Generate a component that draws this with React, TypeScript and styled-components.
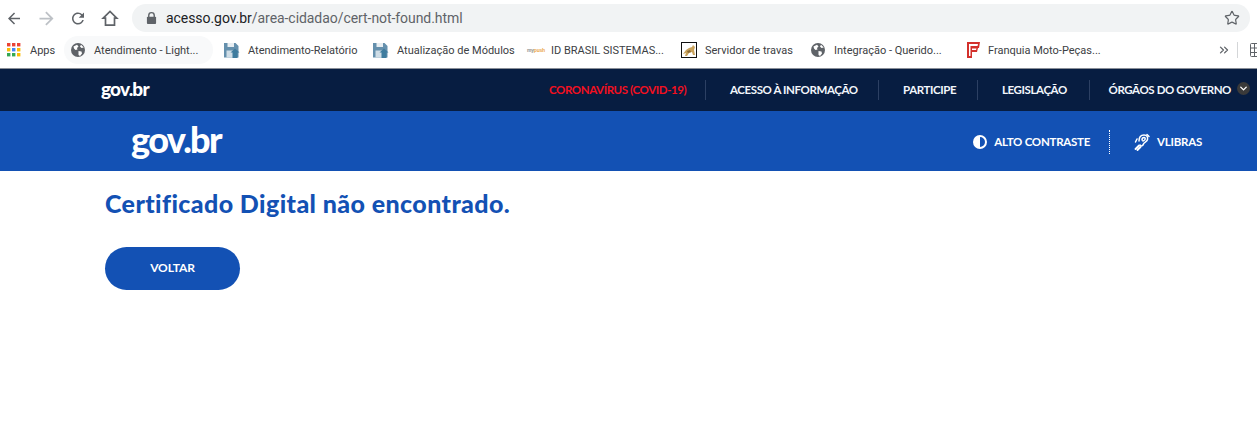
import React from "react";
import styled, { createGlobalStyle } from "styled-components";
import { Star, ChevronDown, ChevronsRight } from "lucide-react";

const Global = createGlobalStyle`
  html, body { margin: 0; padding: 0; background: #fff; }
  body { font-family: "Lato", "Liberation Sans", sans-serif; width: 1257px; height: 433px; overflow: hidden; }
`;

const Chrome = styled.div`
  height: 69px;
  border-bottom: 1px solid #8a8f98;
  box-sizing: border-box;
  background: #fff;
`;
const Toolbar = styled.div`
  height: 36px;
  display: flex;
  align-items: center;
  padding: 0 7px 0 5px;
`;
const NavButton = styled.div<{ $w: number; $c?: string }>`
  width: ${(p) => p.$w}px;
  display: flex;
  align-items: center;
  justify-content: center;
  color: ${(p) => p.$c || "#5f6368"};
  flex: none;
`;
const Omnibox = styled.div`
  flex: 1;
  height: 28px;
  border-radius: 14px;
  background: #f1f3f4;
  display: flex;
  align-items: center;
  padding: 0 10px 0 14px;
  font: 14px "Roboto", "Noto Sans", sans-serif;
  letter-spacing: -0.06px;
  color: #5f6368;
`;
const LockBox = styled.div`
  width: 20px;
  flex: none;
  display: flex;
  align-items: center;
`;
const Host = styled.span`
  color: #202124;
`;
const UrlText = styled.div`
  flex: 1;
  white-space: nowrap;
`;
const Bookmarks = styled.div`
  height: 28px;
  display: flex;
  align-items: center;
  padding-left: 6px;
  font: 11px "Roboto", "Noto Sans", sans-serif;
  color: #3c4043;
`;
const Mark = styled.div<{ $w: number; $active?: boolean; $gap?: number; $after?: number }>`
  width: ${(p) => p.$w}px;
  height: 28px;
  flex: none;
  display: flex;
  align-items: center;
  gap: ${(p) => p.$gap ?? 8}px;
  padding-left: 7px;
  margin-right: ${(p) => p.$after ?? 0}px;
  box-sizing: border-box;
  border-radius: 14px;
  background: ${(p) => (p.$active ? "#f8f9fa" : "transparent")};
  white-space: nowrap;
`;
const AppsMark = styled.div`
  width: 58px;
  height: 28px;
  flex: none;
  display: flex;
  align-items: center;
  gap: 8px;
`;
const MarkIcon = styled.svg`
  width: 16px;
  height: 16px;
  flex: none;
  display: block;
`;
const MyPush = styled.span`
  width: 16px;
  flex: none;
  font: 700 5px "Liberation Sans", sans-serif;
  letter-spacing: -0.2px;
  color: #8f8f8f;
  white-space: nowrap;
  & > b { color: #eba64a; font-weight: 700; }
`;
const BarEnd = styled.div`
  margin-left: auto;
  margin-right: -8px;
  display: flex;
  align-items: center;
  color: #5f6368;
  height: 16px;
`;
const BarDivider = styled.div`
  width: 1px;
  height: 16px;
  background: #d4d6d8;
  margin: 0 11px 0 6px;
`;

const TopBar = styled.div`
  height: 42px;
  background: #071d41;
  display: flex;
  align-items: center;
  padding-left: 101px;
  color: #fff;
`;
const LogoSmall = styled.div`
  font: 900 19px/1 "Lato", sans-serif;
  letter-spacing: -0.8px;
  margin-top: -3px;
`;
const TopNav = styled.nav`
  margin-left: auto;
  display: flex;
  align-items: center;
  padding-right: 7px;
`;
const TopItem = styled.div<{ $red?: boolean; $last?: boolean; $w: number; $pad?: number }>`
  height: 20px;
  width: ${(p) => p.$w}px;
  padding-left: ${(p) => p.$pad ?? 0}px;
  box-sizing: border-box;
  display: flex;
  align-items: center;
  justify-content: ${(p) => (p.$last ? "flex-end" : "flex-start")};
  border-right: ${(p) => (p.$last ? "none" : "1px solid #2c4063")};
  color: ${(p) => (p.$red ? "#f3101f" : "#f2f6fb")};
  font: 700 11.5px/20px "Lato", sans-serif;
  letter-spacing: -0.4px;
  white-space: nowrap;
`;
const ChevronCircle = styled.span`
  width: 13px;
  height: 13px;
  margin-left: 6px;
  margin-top: -3px;
  border-radius: 50%;
  background: #3a3a3a;
  color: #fff;
  display: flex;
  align-items: center;
  justify-content: center;
`;

const MainBar = styled.div`
  height: 60px;
  background: #1351b4;
  display: flex;
  align-items: center;
  padding: 0 55px 0 131px;
  color: #fff;
`;
const LogoLarge = styled.div`
  font: 900 36px/1 "Lato", sans-serif;
  letter-spacing: -1.6px;
  margin-top: -4px;
`;
const Tools = styled.div`
  margin-left: auto;
  display: flex;
  align-items: center;
  font: 700 11.5px/20px "Lato", sans-serif;
  letter-spacing: -0.25px;
  padding-top: 1px;
`;
const ToolItem = styled.div`
  display: flex;
  align-items: center;
  gap: 7px;
`;
const ToolDivider = styled.div`
  width: 0;
  height: 24px;
  margin: 0 24px 0 19px;
  border-left: 1px dotted #fff;
`;

const Main = styled.main`
  padding: 18px 0 0 105px;
`;
const Title = styled.h1`
  margin: 0;
  font: 900 25px/28px "Lato", sans-serif;
  color: #1351b4;
  letter-spacing: 0.4px;
`;
const BackButton = styled.button`
  display: block;
  margin-top: 30px;
  width: 135px;
  height: 43px;
  border: none;
  border-radius: 22px;
  background: #1351b4;
  color: #fff;
  font: 700 12px/1 "Lato", sans-serif;
  letter-spacing: -0.1px;
  padding: 0 0 2px;
`;

const Globe = () => (
  <MarkIcon viewBox="0 0 16 16">
    <circle cx="7" cy="8" r="7" fill="#5f6368" />
    <path d="M2.500 4.500 6 2.800 7.500 4.500 6 6 6.500 7.500 4.500 8 3 6.500zM7.500 9l3 .5 .5 2L9 14 7.500 13zM10 2.800 12.800 5.500 10.500 6 9 4.500z" fill="#fff" />
  </MarkIcon>
);
const Floppy = () => (
  <MarkIcon viewBox="0 0 16 16">
    <path d="M0 1h11.500l3 3v11.500H0z" fill="#6590ad" />
    <rect x="3.500" y="1" width="6.500" height="4" fill="#e8eef2" />
    <rect x="2.500" y="8.500" width="7" height="7" fill="#cfdde6" />
    <path d="M11 6.500 15.500 10.500H13.500V16h-5V10.500H6.500z" fill="#3f7c9e" />
  </MarkIcon>
);
const Tomcat = () => (
  <MarkIcon viewBox="0 0 16 16">
    <rect x=".5" y=".5" width="15" height="15" fill="#fff" stroke="#111" />
    <path d="M2 12 5 8l3-2 3-1 1-2 2 2-1 3 1 5h-2l-1-3-3 1-2 3H4l1-3z" fill="#c9a25b" />
    <path d="M6 9l3-1 1 2-3 1z" fill="#8a6a35" />
  </MarkIcon>
);
const FranquiaF = () => (
  <MarkIcon viewBox="0 0 14 16">
    <path d="M1 0H14L13 6H12L11 10H6V16H1Z" fill="#d3302b" />
    <path d="M3 2H12L11.500 4H3ZM6 6.500H10.500L10 8H6ZM3 4H4.500V14H3Z" fill="#fff" />
  </MarkIcon>
);
const AppsGrid = () => {
  const colors = ["#ea4335", "#ea4335", "#ea4335", "#fbbc04", "#4285f4", "#fbbc04", "#34a853", "#34a853", "#fbbc04"];
  return (
    <MarkIcon viewBox="0 0 16 16">
      {colors.map((c, i) => (
        <rect key={i} x={1 + (i % 3) * 5} y={1 + Math.floor(i / 3) * 5} width="3.400" height="3.400" fill={c} />
      ))}
    </MarkIcon>
  );
};
const Lock = () => (
  <svg width="11" height="14" viewBox="0 0 12 14">
    <path d="M3 6V4.200a3 3 0 0 1 6 0V6" fill="none" stroke="#5f6368" strokeWidth="1.500" />
    <rect x="1" y="5.500" width="10" height="8" rx="1" fill="#5f6368" />
  </svg>
);
const Contrast = () => (
  <svg width="14" height="14" viewBox="0 0 14 14">
    <circle cx="7" cy="7" r="6" fill="#1351b4" stroke="#fff" strokeWidth="2" />
    <path d="M7 1a6 6 0 0 0 0 12z" fill="#fff" />
  </svg>
);
const Libras = () => (
  <svg width="16" height="18" viewBox="0 0 16 18" fill="none" stroke="#fff" strokeWidth="1.500" strokeLinecap="round">
    <path d="M5 8c0-4 2-6 5-6s4 2 3.500 4.500S10 9 9.500 11 7 13.500 6 12" />
    <path d="M8 7c0-1.500 1-2.500 2-2.500s1.500 1 1 2-2 1.500-2 1.500" />
    <path d="M1.500 16 5 12.500M3.500 17 6.500 14" strokeWidth="1.800" />
    <path d="M13 1.500 15 3.500M3 6 1.500 9" />
  </svg>
);
const MaterialIcon = ({ d, size }: { d: string; size: number }) => (
  <svg width={size} height={size} viewBox="0 0 24 24" fill="currentColor"><path d={d} /></svg>
);
const ARROW_LEFT = "M20 11H7.830l5.590-5.590L12 4l-8 8 8 8 1.410-1.410L7.830 13H20v-2z";
const ARROW_RIGHT = "M4 11h12.170l-5.590-5.590L12 4l8 8-8 8-1.410-1.410L16.170 13H4v-2z";
const RELOAD = "M17.650 6.350A7.958 7.958 0 0 0 12 4c-4.420 0-7.990 3.580-7.990 8s3.570 8 7.990 8c3.730 0 6.840-2.550 7.730-6h-2.080A5.990 5.990 0 0 1 12 18c-3.310 0-6-2.690-6-6s2.690-6 6-6c1.660 0 3.140.69 4.220 1.780L13 11h7V4l-2.350 2.350z";
const HomeIcon = () => (
  <svg width="18" height="18" viewBox="0 0 18 18" fill="none" stroke="currentColor" strokeWidth="1.700">
    <path d="M2.200 9.200 9 2.400l6.800 6.800h-2.300v7H4.500v-7z" strokeLinejoin="miter" />
  </svg>
);

export default function App() {
  return (
    <>
      <Global />
      <Chrome>
        <Toolbar>
          <NavButton $w={18}><MaterialIcon d={ARROW_LEFT} size={21} /></NavButton>
          <NavButton $w={46} $c="#bdc1c6"><MaterialIcon d={ARROW_RIGHT} size={21} /></NavButton>
          <NavButton $w={18}><MaterialIcon d={RELOAD} size={21} /></NavButton>
          <NavButton $w={45}><HomeIcon /></NavButton>
          <Omnibox>
            <LockBox><Lock /></LockBox>
            <UrlText><Host>acesso.gov.br</Host>/area-cidadao/cert-not-found.html</UrlText>
            <Star size={16} strokeWidth={1.800} color="#5f6368" />
          </Omnibox>
        </Toolbar>
        <Bookmarks>
          <AppsMark><AppsGrid />Apps</AppsMark>
          <Mark $w={149} $active $gap={7} $after={4}><Globe />Atendimento - Light...</Mark>
          <Mark $w={149}><Floppy />Atendimento-Relatório</Mark>
          <Mark $w={154}><Floppy />Atualização de Módulos</Mark>
          <Mark $w={154}><MyPush>my<b>push</b></MyPush>ID BRASIL SISTEMAS...</Mark>
          <Mark $w={130}><Tomcat />Servidor de travas</Mark>
          <Mark $w={154} $gap={7}><Globe />Integração - Querido...</Mark>
          <Mark $w={160} $gap={7}><FranquiaF />Franquia Moto-Peças...</Mark>
          <BarEnd>
            <ChevronsRight size={14} strokeWidth={2.200} />
            <BarDivider />
            <MarkIcon viewBox="0 0 16 16" fill="none" stroke="#5f6368"><rect x="1.500" y="1.500" width="13" height="13" rx="1" /><path d="M5.500 1.500v13M10 1.500v13M1.500 6h13M1.500 10.500h13" /></MarkIcon>
          </BarEnd>
        </Bookmarks>
      </Chrome>
      <TopBar>
        <LogoSmall>gov.br</LogoSmall>
        <TopNav>
          <TopItem $red $w={157}>CORONAVÍRUS (COVID-19)</TopItem>
          <TopItem $w={173} $pad={24}>ACESSO À INFORMAÇÃO</TopItem>
          <TopItem $w={99} $pad={24}>PARTICIPE</TopItem>
          <TopItem $w={112} $pad={24}>LEGISLAÇÃO</TopItem>
          <TopItem $last $w={160}>ÓRGÃOS DO GOVERNO<ChevronCircle><ChevronDown size={11} strokeWidth={3} /></ChevronCircle></TopItem>
        </TopNav>
      </TopBar>
      <MainBar>
        <LogoLarge>gov.br</LogoLarge>
        <Tools>
          <ToolItem><Contrast />ALTO CONTRASTE</ToolItem>
          <ToolDivider />
          <ToolItem><Libras />VLIBRAS</ToolItem>
        </Tools>
      </MainBar>
      <Main>
        <Title>Certificado Digital não encontrado.</Title>
        <BackButton>VOLTAR</BackButton>
      </Main>
    </>
  );
}
